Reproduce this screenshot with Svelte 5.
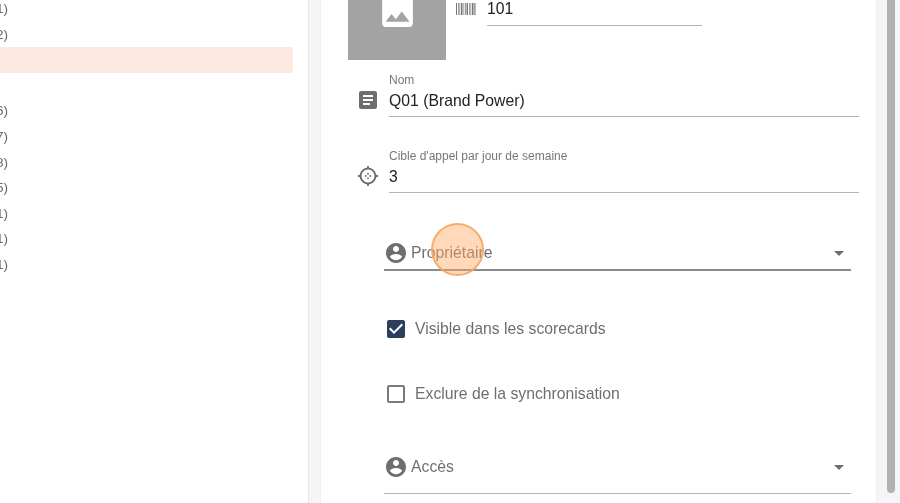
<script>
  const rows = ['(1)', '(2)', '', '', '(6)', '(7)', '(8)', '(5)', '(1)', '(1)', '(1)'];
  const person = 'M12 2C6.48 2 2 6.48 2 12s4.48 10 10 10 10-4.48 10-10S17.52 2 12 2zm0 3c1.66 0 3 1.34 3 3s-1.34 3-3 3-3-1.34-3-3 1.34-3 3-3zm0 14.2c-2.5 0-4.71-1.28-6-3.22.03-1.99 4-3.08 6-3.08 1.99 0 5.97 1.09 6 3.08-1.29 1.94-3.5 3.22-6 3.22z';
  const checked = 'M19 3H5c-1.11 0-2 .9-2 2v14c0 1.1.89 2 2 2h14c1.11 0 2-.9 2-2V5c0-1.1-.89-2-2-2zm-9 14l-5-5 1.41-1.41L10 14.17l7.59-7.59L19 8l-9 9z';
  const unchecked = 'M19 5v14H5V5h14m0-2H5c-1.1 0-2 .9-2 2v14c0 1.1.9 2 2 2h14c1.1 0 2-.9 2-2V5c0-1.1-.9-2-2-2z';
  const bars = [[0,1],[2,.7],[3.5,.7],[5,1.5],[7.5,.7],[9,.7],[10.5,1.5],[13,.7],[14.5,.7],[16,1.5],[18.3,1.2]];
</script>

{#snippet select(label, active)}
  <div class="select" class:active>
    <svg class="ic" viewBox="0 0 24 24"><path d={person} /></svg>
    <span class="select-label">{label}</span>
    <svg class="caret" viewBox="0 0 24 24"><path d="M7 10l5 5 5-5z" /></svg>
  </div>
{/snippet}

<div class="page">
  <aside class="list">
    {#each rows as r, i}
      <div class="row" class:selected={i === 2}><span>{r}</span></div>
    {/each}
  </aside>

  <main class="card">
    <div class="top">
      <div class="picture">
        <svg viewBox="0 0 24 24"><path d="M21 19V5c0-1.1-.9-2-2-2H5c-1.1 0-2 .9-2 2v14c0 1.1.9 2 2 2h14c1.1 0 2-.9 2-2zM8.5 13.5l2.5 3.01L14.5 12l4.5 6H5l3.5-4.5z" /></svg>
      </div>
      <svg class="barcode" viewBox="0 0 20 12">
        {#each bars as b}<rect x={b[0]} y="0" width={b[1]} height="12" />{/each}
      </svg>
      <div class="code">101</div>
    </div>

    <div class="field first">
      <svg class="ic" viewBox="0 0 24 24"><path d="M19 3H5c-1.1 0-2 .9-2 2v14c0 1.1.9 2 2 2h14c1.1 0 2-.9 2-2V5c0-1.1-.9-2-2-2zm-5 14H7v-2h7v2zm3-4H7v-2h10v2zm0-4H7V7h10v2z" /></svg>
      <div class="input">
        <label>Nom</label>
        <div class="value">Q01 (Brand Power)</div>
      </div>
    </div>

    <div class="field second">
      <svg class="ic target" viewBox="0 0 24 24"><path d="M20.94 11c-.46-4.17-3.77-7.48-7.94-7.94V1h-2v2.06C6.83 3.52 3.52 6.83 3.06 11H1v2h2.06c.46 4.17 3.77 7.48 7.94 7.94V23h2v-2.06c4.17-.46 7.48-3.77 7.94-7.94H23v-2h-2.06zM12 19c-3.87 0-7-3.13-7-7s3.13-7 7-7 7 3.13 7 7-3.13 7-7 7z" /><circle cx="12" cy="9.5" r="1" /><circle cx="12" cy="14.5" r="1" /><circle cx="9.5" cy="12" r="1" /><circle cx="14.5" cy="12" r="1" /></svg>
      <div class="input">
        <label>Cible d'appel par jour de semaine</label>
        <div class="value">3</div>
      </div>
    </div>

    {@render select('Propriétaire', true)}

    <div class="check one">
      <svg class="box on" viewBox="0 0 24 24"><path d={checked} /></svg>
      <span>Visible dans les scorecards</span>
    </div>
    <div class="check two">
      <svg class="box" viewBox="0 0 24 24"><path d={unchecked} /></svg>
      <span>Exclure de la synchronisation</span>
    </div>

    {@render select('Accès', false)}
  </main>

  <div class="scroll"><div class="thumb"></div></div>
  <div class="click"></div>
</div>

<style>
  :global(body) {
    margin: 0;
    background: #fff;
  }

  .page {
    position: relative;
    display: flex;
    width: 900px;
    height: 503px;
    overflow: hidden;
    font-family: "Liberation Sans", Arial, sans-serif;
    background: #f4f5f7;
    filter: blur(0.4px);
  }

  .list {
    box-sizing: border-box;
    flex: 0 0 309px;
    padding-right: 15px;
    padding-top: 47px;
    margin-top: -51px;
    height: 560px;
    background: #fff;
    border-right: 1px solid #e6e7ea;
  }

  .row {
    height: 25.6px;
    line-height: 25.6px;
    font-size: 13.5px;
    color: #666;
  }

  .row span {
    margin-left: -8.5px;
  }

  .selected {
    background: #fde9df;
  }

  .card {
    position: relative;
    flex: 0 0 557px;
    margin-left: 11px;
    height: 560px;
    background: #fff;
    border-left: 1px solid #eceef1;
    border-right: 1px solid #eceef1;
    box-sizing: border-box;
    padding-left: 27px;
  }

  .top {
    display: flex;
    align-items: flex-start;
    height: 60px;
  }

  .picture {
    flex: 0 0 98px;
    height: 98px;
    margin-top: -38px;
    display: flex;
    align-items: center;
    justify-content: center;
    background: #a3a3a3;
  }

  .picture svg {
    width: 41px;
    height: 41px;
    fill: #fff;
  }

  .barcode {
    width: 20px;
    height: 12px;
    margin: 3px 0 0 10px;
    fill: #777;
  }

  .code {
    box-sizing: border-box;
    width: 215px;
    height: 26px;
    margin-left: 11px;
    font-size: 15.75px;
    line-height: 18px;
    color: #222;
    border-bottom: 1px solid #b5b5b5;
  }

  .field {
    display: flex;
    align-items: flex-end;
  }

  .first {
    margin-top: 13px;
  }

  .second {
    margin-top: 32px;
  }

  .ic {
    flex: none;
    width: 24px;
    height: 24px;
    fill: #6e6e6e;
  }

  .field .ic {
    margin: 0 9px 5px 8px;
  }

  .field .target {
    margin: 0 10px 6px 9px;
    width: 22px;
    height: 22px;
  }

  .input {
    width: 470px;
    border-bottom: 1px solid #b5b5b5;
    padding-bottom: 6px;
  }

  label {
    display: block;
    font-size: 12px;
    line-height: 14px;
    color: #777;
    margin-bottom: 5px;
  }

  .value {
    font-size: 15.75px;
    line-height: 18px;
    color: #222;
  }

  .select {
    display: flex;
    align-items: center;
    box-sizing: border-box;
    width: 467px;
    height: 34px;
    margin: 44px 0 0 36px;
    border-bottom: 1px solid #b5b5b5;
    color: #707070;
    font-size: 15.75px;
  }

  .select.active {
    border-bottom: 2px solid #8a8a8a;
  }

  .select .ic {
    margin-right: 3px;
  }

  .select-label {
    flex: 1;
  }

  .caret {
    width: 24px;
    height: 24px;
    fill: #6e6e6e;
  }

  .check {
    display: flex;
    align-items: center;
    margin-left: 36px;
    height: 24px;
    font-size: 15.75px;
    color: #6e6e6e;
  }

  .check .box {
    width: 24px;
    height: 24px;
    margin-right: 7px;
    fill: #7a7a7a;
  }

  .check .box.on {
    fill: #2c3e5c;
  }

  .one {
    margin-top: 46px;
  }

  .two {
    margin-top: 41px;
  }

  .two + .select {
    margin-top: 44px;
    height: 44px;
    padding-bottom: 10px;
  }

  .scroll {
    flex: 1;
    padding-left: 10px;
  }

  .thumb {
    width: 8px;
    height: 493px;
    background: #b2b2b2;
    border-radius: 0 0 4px 4px;
  }

  .click {
    position: absolute;
    left: 431px;
    top: 223px;
    width: 53px;
    height: 53px;
    box-sizing: border-box;
    border-radius: 50%;
    background: rgba(255, 170, 100, 0.45);
    border: 2px solid rgba(245, 165, 100, 0.85);
  }
</style>
